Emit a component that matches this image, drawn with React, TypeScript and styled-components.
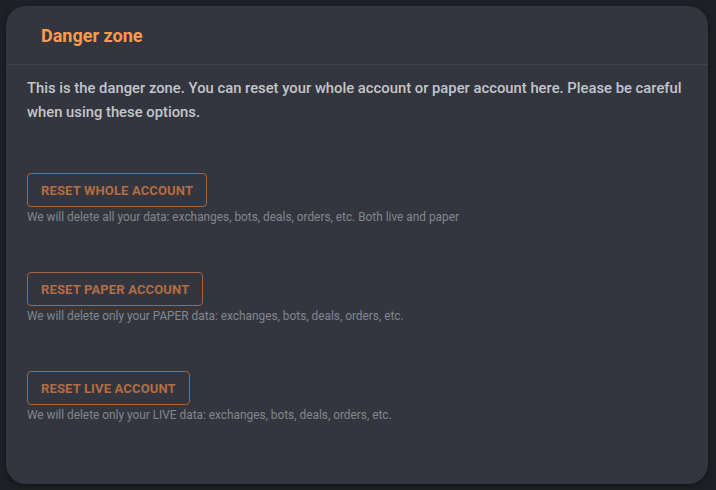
import React from "react";
import styled, { createGlobalStyle } from "styled-components";

const Global = createGlobalStyle`
  html, body { margin: 0; padding: 0; background: #1f2025; }
  body { font-family: Roboto, "Liberation Sans", sans-serif; }
`;

const Page = styled.div`
  padding: 6px 8px 6px 6px;
  width: 716px;
  height: 490px;
  box-sizing: border-box;
`;

const Card = styled.section`
  background: #33363e;
  border-radius: 20px;
  height: 478px;
  box-shadow: 0 2px 6px rgba(0,0,0,0.4);
  display: flex;
  flex-direction: column;
  overflow: hidden;
`;

const Header = styled.header`
  flex-shrink: 0;
  height: 59px;
  box-sizing: border-box;
  padding: 0 35px;
  display: flex;
  align-items: center;
  border-bottom: 1px solid #3e414a;
`;

const Title = styled.h2`
  margin: 0;
  font-size: 18px;
  font-weight: 700;
  color: #ff9b4e;
`;

const Body = styled.div`
  padding: 11px 21px 0 21px;
`;

const Intro = styled.p`
  margin: 0 0 49px;
  font-size: 14.8px;
  line-height: 24px;
  font-weight: 500;
  color: #c2c5cb;
`;

const Section = styled.div`
  display: flex;
  flex-direction: column;
  align-items: flex-start;
  & + & { margin-top: 46px; }
`;

const Button = styled.button`
  height: 34px;
  padding: 0 13px;
  background: transparent;
  border: 1px solid #a9643b;
  border-radius: 4px;
  color: #b56c42;
  font-family: Roboto, "Liberation Sans", sans-serif;
  font-size: 13px;
  font-weight: 700;
  letter-spacing: 0.15px;
  text-transform: uppercase;
  cursor: pointer;
`;

const Note = styled.p`
  margin: 1px 0 0;
  font-size: 11.85px;
  line-height: 18px;
  color: #83868c;
`;

const items = [
  { label: "Reset whole account", note: "We will delete all your data: exchanges, bots, deals, orders, etc. Both live and paper" },
  { label: "Reset paper account", note: "We will delete only your PAPER data: exchanges, bots, deals, orders, etc." },
  { label: "Reset live account", note: "We will delete only your LIVE data: exchanges, bots, deals, orders, etc." },
];

export default function App() {
  return (
    <Page>
      <Global />
      <Card>
        <Header>
          <Title>Danger zone</Title>
        </Header>
        <Body>
          <Intro>
            This is the danger zone. You can reset your whole account or paper account here. Please be careful when using these options.
          </Intro>
          {items.map((it) => (
            <Section key={it.label}>
              <Button>{it.label}</Button>
              <Note>{it.note}</Note>
            </Section>
          ))}
        </Body>
      </Card>
    </Page>
  );
}
